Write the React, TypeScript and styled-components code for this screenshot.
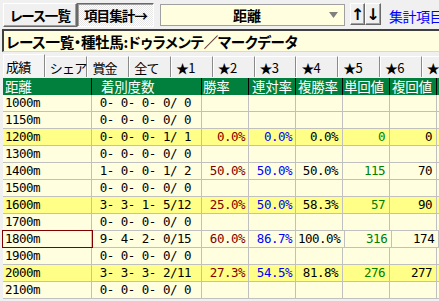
import React from "react";
import styled, { createGlobalStyle } from "styled-components";

const GlobalStyle = createGlobalStyle`
  html, body { margin: 0; padding: 0; background: #f0f0f0; }
  body { font-family: "Noto Sans CJK JP", "Noto Sans", sans-serif; }
  * { box-sizing: border-box; }
`;

const Window = styled.div`
  width: 439px;
  height: 301px;
  overflow: hidden;
  background: #f0f0f0;
  display: flex;
  flex-direction: column;
`;

const Toolbar = styled.div`
  flex: none;
  height: 29px;
  display: flex;
  align-items: flex-start;
  padding: 3px 0 0 3px;
  white-space: nowrap;
`;

const RaisedButton = styled.div<{ $w: number }>`
  flex: none;
  width: ${(p) => p.$w}px;
  height: 24px;
  display: flex;
  align-items: center;
  justify-content: center;
  background: #f0f0f0;
  border-top: 1px solid #ffffff;
  border-left: 1px solid #ffffff;
  border-right: 1px solid #696969;
  border-bottom: 1px solid #696969;
  box-shadow: inset -1px -1px 0 #a0a0a0;
  font-size: 13.5px;
  font-weight: 700;
  color: #000;
  letter-spacing: -0.9px;
  font-feature-settings: "palt";
`;

const PressedButton = styled(RaisedButton)`
  background: repeating-conic-gradient(#ffffff 0 25%, #e6e6e6 0 50%) 0 0 / 2px 2px;
  border-top: 1px solid #696969;
  border-left: 1px solid #696969;
  border-right: 1px solid #ffffff;
  border-bottom: 1px solid #ffffff;
  box-shadow: inset 1px 1px 0 #a0a0a0;
`;

const Select = styled.div`
  flex: none;
  margin: 1px 0 0 6px;
  width: 185px;
  height: 22px;
  background: #ffffe0;
  border: 1px solid #a0a0a0;
  display: flex;
  align-items: center;
`;

const SelectLabel = styled.div`
  flex: 1;
  text-align: center;
  font-size: 14px;
  font-weight: 700;
  color: #000;
  padding-left: 4px;
`;

const SelectArrow = styled.svg`
  width: 9px;
  height: 6px;
  margin-right: 6px;
`;

const ArrowButton = styled(RaisedButton)`
  height: 22px;
  font-family: "DejaVu Sans", sans-serif;
  font-size: 16px;
  letter-spacing: 0;
`;

const FirstArrow = styled(ArrowButton)`
  margin-left: 5px;
`;

const LinkText = styled.div`
  margin: 3px 0 0 8px;
  font-size: 14px;
  color: #0000ff;
  letter-spacing: -0.5px;
`;

const TitleBar = styled.div`
  flex: none;
  margin-left: 2px;
  height: 23px;
  background: #ffffe0;
  border-top: 2px solid #404040;
  border-left: 2px solid #404040;
  border-bottom: 1px solid #d8d8d8;
  display: flex;
  align-items: center;
  padding-left: 2px;
  font-weight: 700;
  font-size: 14.5px;
  color: #000;
  white-space: nowrap;
  font-feature-settings: "palt";
  letter-spacing: -0.3px;
`;

const TabRow = styled.div`
  flex: none;
  height: 25px;
  display: flex;
  align-items: flex-end;
  padding-left: 3px;
  white-space: nowrap;
`;

const Tab = styled.div<{ $active?: boolean }>`
  flex: 0 0 41.8px;
  height: ${(p) => (p.$active ? 23 : 21)}px;
  display: flex;
  align-items: center;
  padding-left: ${(p) => (p.$active ? 2 : 4)}px;
  background: ${(p) => (p.$active ? "#f4f4f4" : "#f0f0f0")};
  border-top: 1px solid #ffffff;
  border-left: 1px solid #ffffff;
  border-right: 1px solid #8a8a8a;
  font-size: 13px;
  color: #000;
  letter-spacing: -0.8px;
`;

const Table = styled.div`
  flex: none;
  margin: 1px 0 0 3px;
  display: flex;
  flex-direction: column;
`;

const HeaderRow = styled.div`
  display: flex;
  height: 17px;
  background: #00803c;
`;

const HeaderCell = styled.div<{ $w: number; $pad: number }>`
  flex: 0 0 ${(p) => p.$w}px;
  border-right: 1px solid #000;
  padding-left: ${(p) => p.$pad}px;
  color: #fff;
  font-size: 13.5px;
  line-height: 17px;
  letter-spacing: -0.2px;
  white-space: nowrap;
`;

const Row = styled.div<{ $hl?: boolean }>`
  display: flex;
  height: 17px;
  background: ${(p) => (p.$hl ? "#ffff88" : "#ffffe0")};
  border-bottom: 1px solid #c0c0c0;
`;

const Cell = styled.div<{ $w: number; $align?: string; $color?: string; $focus?: boolean; $pr?: number }>`
  flex: 0 0 ${(p) => p.$w}px;
  border-right: 1px solid #c0c0c0;
  padding: 0 ${(p) => p.$pr ?? 3}px 0 2px;
  text-align: ${(p) => p.$align ?? "left"};
  color: ${(p) => p.$color ?? "#000"};
  font-family: "DejaVu Sans Mono", monospace;
  font-size: 12.5px;
  letter-spacing: -0.5px;
  line-height: 16px;
  white-space: pre;
  ${(p) => (p.$focus ? "outline: 1px solid #800000; outline-offset: 0px; z-index: 1;" : "")}
`;

const widths = [89, 110, 47, 47, 47, 47, 47, 40];
const headers: [string, number][] = [
  ["距離", 2],
  ["着別度数", 9],
  ["勝率", 1],
  ["連対率", 3],
  ["複勝率", 2],
  ["単回値", 1],
  ["複回値", 2],
  ["", 2],
];

type RowData = {
  dist: string;
  rec: string;
  vals?: [string, string, string, string, string];
  hl?: boolean;
  focus?: boolean;
};

const rows: RowData[] = [
  { dist: "1000m", rec: "0- 0- 0- 0/ 0" },
  { dist: "1150m", rec: "0- 0- 0- 0/ 0" },
  { dist: "1200m", rec: "0- 0- 0- 1/ 1", vals: ["0.0%", "0.0%", "0.0%", "0", "0"], hl: true },
  { dist: "1300m", rec: "0- 0- 0- 0/ 0" },
  { dist: "1400m", rec: "1- 0- 0- 1/ 2", vals: ["50.0%", "50.0%", "50.0%", "115", "70"] },
  { dist: "1500m", rec: "0- 0- 0- 0/ 0" },
  { dist: "1600m", rec: "3- 3- 1- 5/12", vals: ["25.0%", "50.0%", "58.3%", "57", "90"], hl: true },
  { dist: "1700m", rec: "0- 0- 0- 0/ 0" },
  { dist: "1800m", rec: "9- 4- 2- 0/15", vals: ["60.0%", "86.7%", "100.0%", "316", "174"], focus: true },
  { dist: "1900m", rec: "0- 0- 0- 0/ 0" },
  { dist: "2000m", rec: "3- 3- 3- 2/11", vals: ["27.3%", "54.5%", "81.8%", "276", "277"], hl: true },
  { dist: "2100m", rec: "0- 0- 0- 0/ 0" },
];

const valColors = ["#800000", "#0000ff", "#000000", "#008000", "#000000"];
const valPad = [3, 3, 4, 4, 4];

const tabs = ["成績", "シェア", "賞金", "全て", "★1", "★2", "★3", "★4", "★5", "★6", "★7"];

export default function App() {
  return (
    <Window>
      <GlobalStyle />
      <Toolbar>
        <RaisedButton $w={74}>レース一覧</RaisedButton>
        <PressedButton $w={77}>項目集計→</PressedButton>
        <Select>
          <SelectLabel>距離</SelectLabel>
          <SelectArrow viewBox="0 0 9 6">
            <path d="M0 0 H9 L4.5 6 Z" fill="#808080" />
          </SelectArrow>
        </Select>
        <FirstArrow $w={15}>↑</FirstArrow>
        <ArrowButton $w={16}>↓</ArrowButton>
        <LinkText>集計項目入れ替え</LinkText>
      </Toolbar>
      <TitleBar>レース一覧・種牡馬:ドゥラメンテ／マークデータ</TitleBar>
      <TabRow>
        {tabs.map((t, i) => (
          <Tab key={t} $active={i === 0}>
            {t}
          </Tab>
        ))}
      </TabRow>
      <Table>
        <HeaderRow>
          {headers.map(([h, pad], i) => (
            <HeaderCell key={i} $w={widths[i]} $pad={pad}>
              {h}
            </HeaderCell>
          ))}
        </HeaderRow>
        {rows.map((r) => (
          <Row key={r.dist} $hl={r.hl}>
            <Cell $w={widths[0]} $focus={r.focus}>
              {r.dist}
            </Cell>
            <Cell $w={widths[1]} $align="right" $pr={10}>
              {r.rec}
            </Cell>
            {[0, 1, 2, 3, 4].map((k) => (
              <Cell key={k} $w={widths[k + 2]} $align="right" $color={valColors[k]} $pr={valPad[k]}>
                {r.vals ? r.vals[k] : ""}
              </Cell>
            ))}
            <Cell $w={widths[7]} />
          </Row>
        ))}
      </Table>
    </Window>
  );
}
